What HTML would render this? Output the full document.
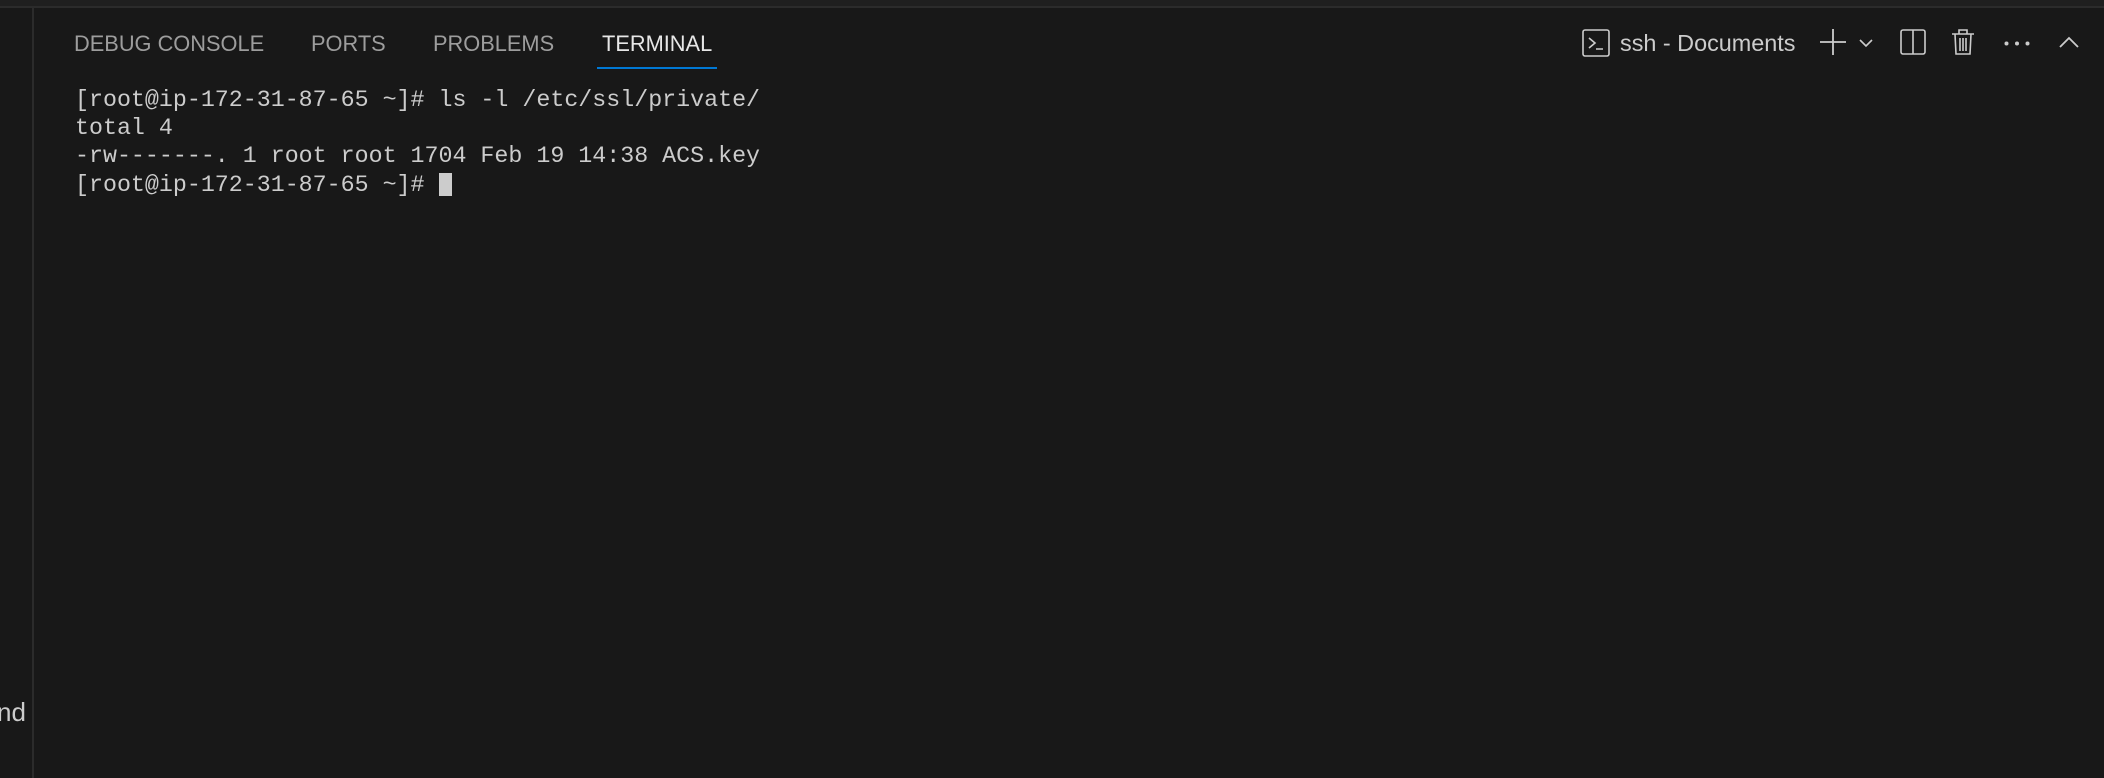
<!DOCTYPE html>
<html><head><meta charset="utf-8"><style>
html,body{margin:0;padding:0;background:#181818;width:2104px;height:778px;overflow:hidden;position:relative;font-family:"Liberation Sans",sans-serif}
.abs{position:absolute}
.tab{position:absolute;top:30px;font-size:21.8px;color:#9d9d9d;line-height:28px;white-space:nowrap}
.term{position:absolute;left:75px;top:86px;font-family:"Liberation Mono",monospace;font-size:23.3px;line-height:28.2px;color:#cccccc;white-space:pre}
svg{position:absolute;overflow:visible}
</style></head><body>
<div class="abs" style="left:0;top:0;width:2104px;height:6px;background:#1f1f1f"></div>
<div class="abs" style="left:0;top:6px;width:2104px;height:2px;background:#2b2b2b"></div>
<div class="abs" style="left:32px;top:8px;width:2px;height:770px;background:#2b2b2b"></div>
<div class="tab" style="left:74px">DEBUG CONSOLE</div>
<div class="tab" style="left:311px">PORTS</div>
<div class="tab" style="left:433px">PROBLEMS</div>
<div class="tab" style="left:602px;color:#e7e7e7">TERMINAL</div>
<div class="abs" style="left:597px;top:67px;width:120px;height:2px;background:#0078d4"></div>
<div class="term">[root@ip-172-31-87-65 ~]# ls -l /etc/ssl/private/
total 4
-rw-------. 1 root root 1704 Feb 19 14:38 ACS.key
[root@ip-172-31-87-65 ~]# </div>
<div class="abs" style="left:439px;top:173px;width:13px;height:23px;background:#cccccc"></div>
<svg style="left:1582px;top:29px" width="28" height="28" viewBox="0 0 28 28" fill="none" stroke="#cccccc" stroke-width="1.6"><rect x="1" y="1" width="26" height="26" rx="2"/><path d="M7 9l6 5-6 5M14 20h7"/></svg>
<div class="abs" style="left:1620px;top:29px;font-size:23.4px;line-height:28px;color:#cccccc;white-space:nowrap">ssh - Documents</div>
<svg style="left:1820px;top:29px" width="26" height="26" fill="none" stroke="#cccccc" stroke-width="1.8"><path d="M13 0v26M0 13h26"/></svg>
<svg style="left:1859px;top:39px" width="14" height="9" fill="none" stroke="#cccccc" stroke-width="1.6"><path d="M1 1l6 6 6-6"/></svg>
<svg style="left:1900px;top:29px" width="26" height="26" fill="none" stroke="#cccccc" stroke-width="1.6"><rect x="1" y="1" width="24" height="24" rx="2"/><path d="M13 1v24"/></svg>
<svg style="left:1952px;top:29px" width="22" height="26" fill="none" stroke="#cccccc" stroke-width="1.6"><path d="M0 5h22M7 5V1h8v4M3 5l1 20h14l1-20M8 9v13M11 9v13M14 9v13"/></svg>
<svg style="left:2004px;top:41px" width="26" height="5" fill="#cccccc"><circle cx="2.5" cy="2.5" r="2"/><circle cx="13" cy="2.5" r="2"/><circle cx="23.5" cy="2.5" r="2"/></svg>
<svg style="left:2059px;top:36px" width="20" height="12" fill="none" stroke="#cccccc" stroke-width="1.8"><path d="M1 11l9-9 9 9"/></svg>
<div class="abs" style="left:-3px;top:697px;font-size:26px;line-height:30px;color:#cccccc">nd</div>
</body></html>
